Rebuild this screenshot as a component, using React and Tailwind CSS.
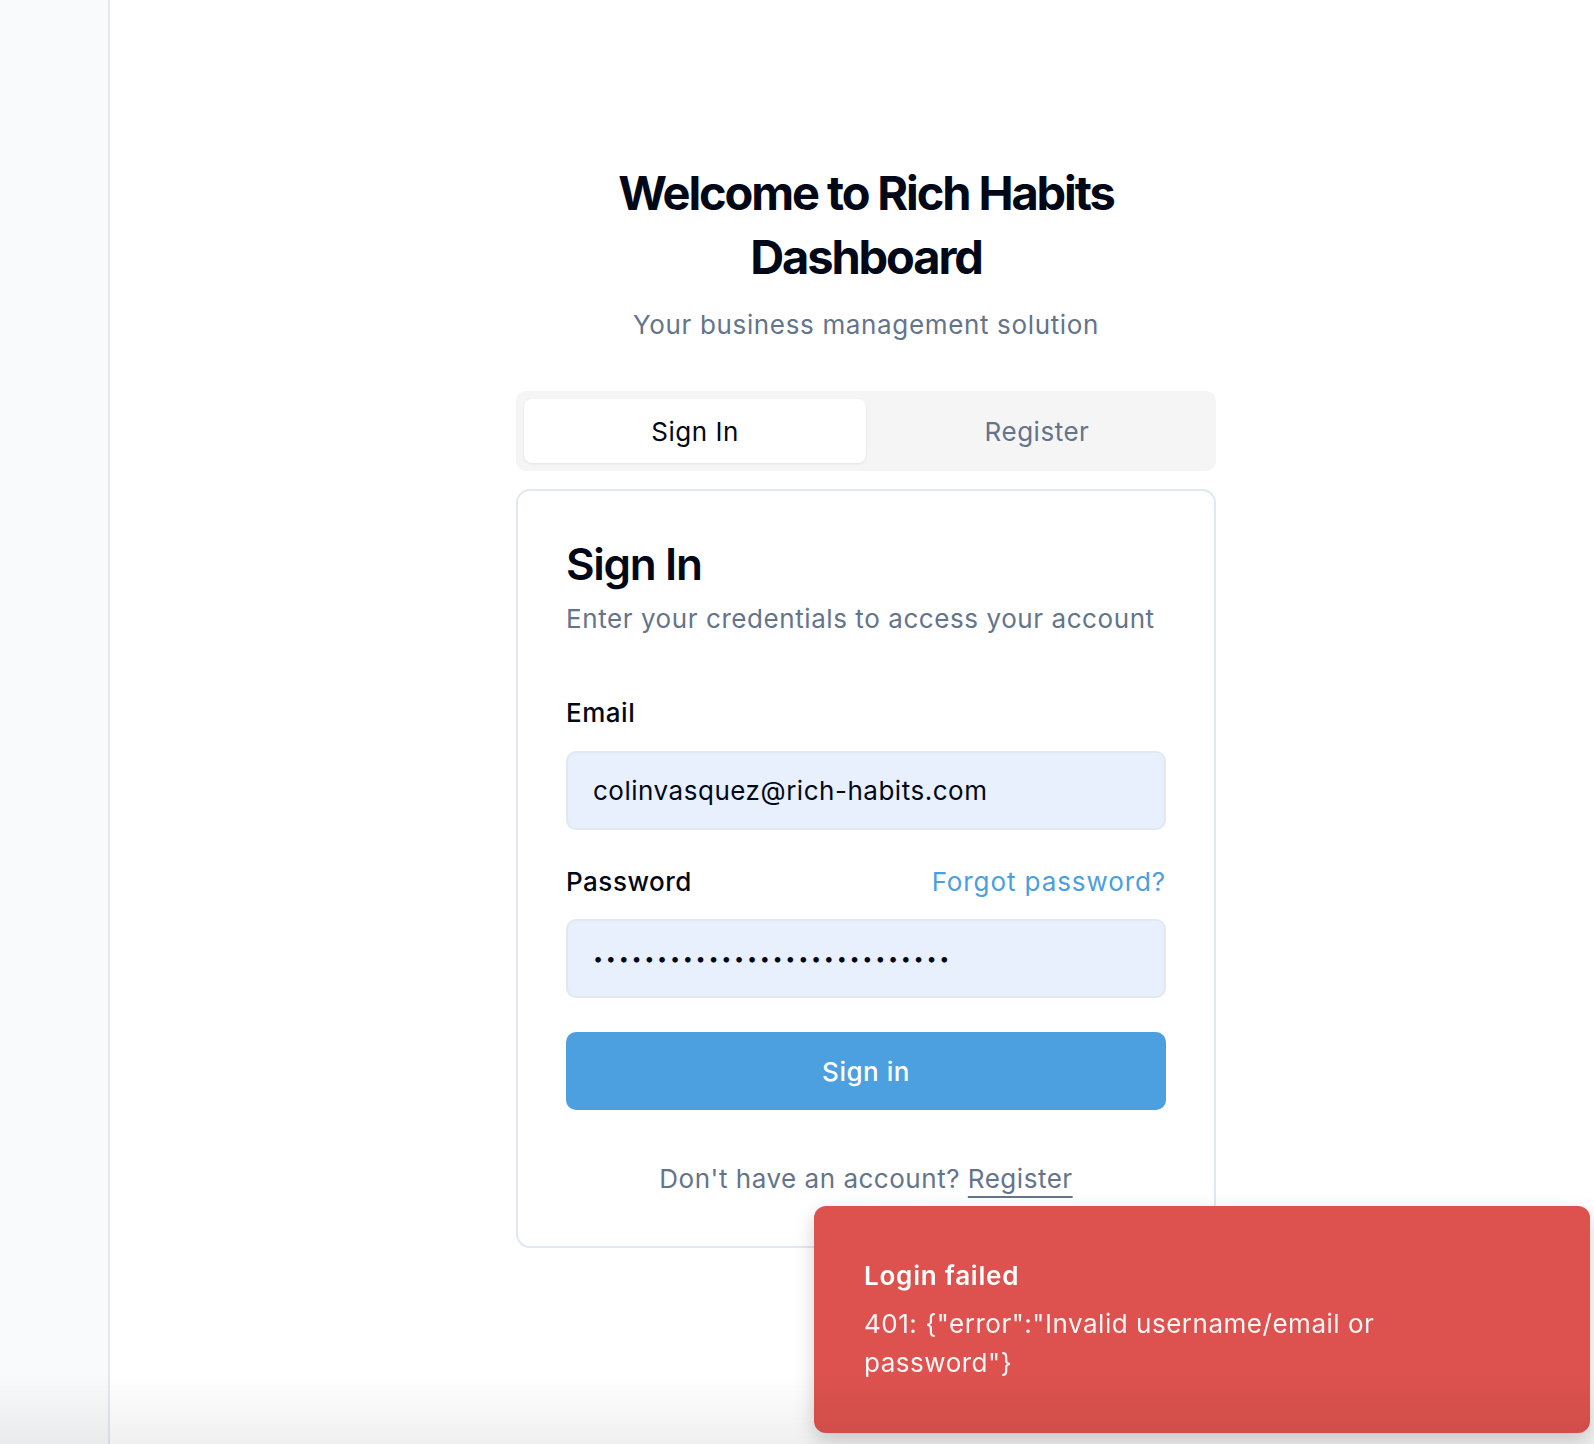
import React from "react";

export default function App() {
  const dots = "•".repeat(28);
  const errText = '401: {"error":"Invalid username/email or password"}';
  return (
    <div className="relative flex min-h-[1444px] font-['Inter','Noto_Sans',sans-serif] text-[#020817]">
      <aside className="w-[110px] shrink-0 bg-[#f8fafc] border-r-2 border-[#e2e8f0]" />
      <main className="flex-1 bg-white flex justify-center pl-[28px]">
        <div className="w-[700px] pt-[161px]">
          <h1 className="max-w-[560px] mx-auto text-center text-[47px] leading-[64px] font-bold tracking-[-0.045em] text-[#020817]">
            Welcome to Rich Habits Dashboard
          </h1>
          <p className="mt-[18px] text-center text-[26px] leading-[36px] tracking-[0.025em] text-[#64748b]">
            Your business management solution
          </p>

          <div className="mt-[48px] h-[80px] rounded-[10px] bg-[#f5f5f5] p-[8px] grid grid-cols-2">
            <div className="rounded-[8px] bg-white shadow-[0_1px_3px_rgba(0,0,0,0.08)] flex items-center justify-center text-[26px] tracking-[0.02em] text-[#020817]">
              Sign In
            </div>
            <div className="flex items-center justify-center text-[26px] tracking-[0.02em] text-[#64748b]">
              Register
            </div>
          </div>

          <div className="mt-[18px] rounded-[14px] border-2 border-[#e2e8f0] bg-white p-[48px] pb-[49px]">
            <h2 className="text-[44px] leading-[50px] font-semibold tracking-[-0.03em] text-[#020817]">Sign In</h2>
            <p className="mt-[12px] text-[26px] leading-[36px] tracking-[0.022em] text-[#64748b]">
              Enter your credentials to access your account
            </p>

            <div className="mt-[58px] text-[26px] leading-[36px] font-medium tracking-[0.02em] text-[#020817]">Email</div>
            <div className="mt-[20px] h-[79px] rounded-[10px] border-2 border-[#e2e8f0] bg-[#e8f0fe] px-[25px] flex items-center text-[26px] tracking-[0.02em] text-[#020817]">
              colinvasquez@rich-habits.com
            </div>

            <div className="mt-[34px] flex items-center justify-between text-[26px] leading-[36px] tracking-[0.02em]">
              <span className="font-medium text-[#020817]">Password</span>
              <span className="text-[#4a9fe0] tracking-[0.035em]">Forgot password?</span>
            </div>
            <div className="mt-[19px] h-[79px] rounded-[10px] border-2 border-[#e2e8f0] bg-[#e8f0fe] px-[25px] flex items-center text-[18px] tracking-[2.7px] text-[#020817]">
              {dots}
            </div>

            <button className="mt-[34px] w-full h-[78px] rounded-[10px] bg-[#4ca0e0] text-white text-[26px] font-medium tracking-[0.02em] flex items-center justify-center">
              Sign in
            </button>

            <p className="mt-[51px] text-center text-[26px] leading-[36px] tracking-[0.02em] text-[#64748b]">
              Don't have an account?{" "}
              <span className="underline decoration-2 underline-offset-[8px]">Register</span>
            </p>
          </div>
        </div>
      </main>

      <div className="fixed right-[4px] top-[1206px] w-[776px] h-[227px] rounded-[12px] bg-[#dd524e] shadow-[0_8px_20px_rgba(0,0,0,0.18)] pl-[50px] pt-[52px] text-white">
        <div className="text-[26px] leading-[36px] font-semibold tracking-[0.03em]">Login failed</div>
        <div className="mt-[10px] w-[590px] text-[26px] leading-[39px] tracking-[0.02em] text-white/95">
          {errText}
        </div>
      </div>

      <div className="pointer-events-none fixed left-0 right-0 top-[1374px] h-[70px] bg-gradient-to-b from-transparent to-black/[0.06]" />
    </div>
  );
}
